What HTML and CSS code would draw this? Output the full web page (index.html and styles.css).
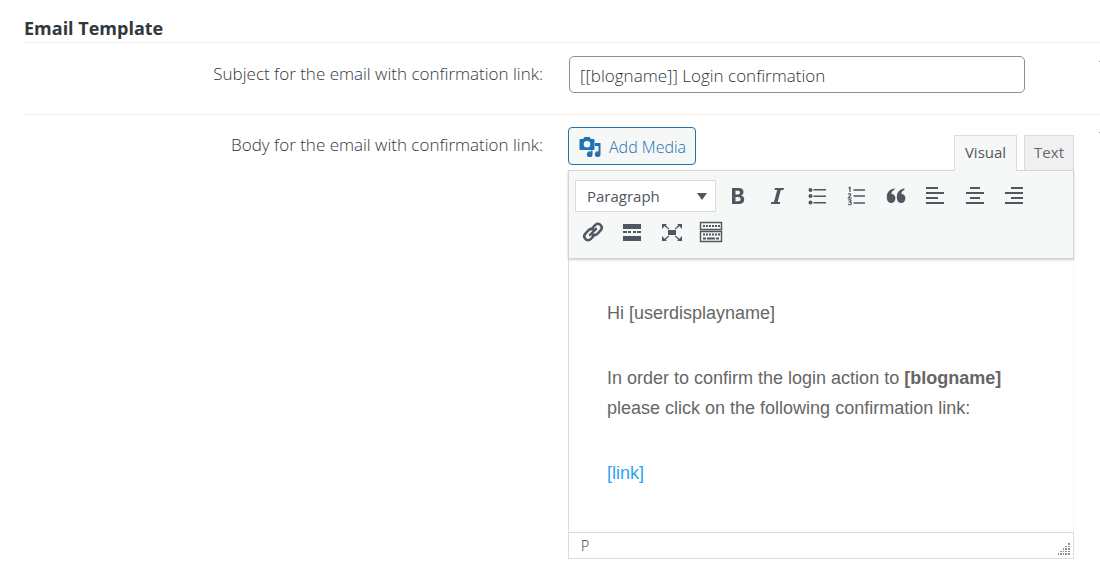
FILE: index.html
```html
<!DOCTYPE html>
<html lang="en">
<head>
    <meta charset="UTF-8">
    <meta name="viewport" content="width=device-width, initial-scale=1.0">
    <title>Email Template</title>
    <link rel="stylesheet" href="styles.css">
</head>
<body>
    <main class="settings">
        <h2 class="section-title">Email Template</h2>

        <div class="form-row">
            <label class="row-label" for="subject">Subject for the email with confirmation link:</label>
            <div class="row-control">
                <input type="text" id="subject" name="subject" class="text-input" value="[[blogname]] Login confirmation">
            </div>
            <span class="row-mark"></span>
        </div>

        <div class="form-row">
            <span class="row-label" id="bodyLabel">Body for the email with confirmation link:</span>
            <div class="row-control">
                <div class="editor-tools">
                    <button type="button" class="media-btn">
                        <svg width="22" height="22" viewBox="0 0 22 22" fill="currentColor">
                            <path fill-rule="evenodd" d="M1.500 3H4L5.500 1h5L12 3h2.500q1 0 1 1v9q0 1-1 1h-13q-1 0-1-1V4q0-1 1-1zM8 5a3.300 3.300 0 1 0 0 6.600A3.300 3.300 0 0 0 8 5z"/>
                            <path d="M16 7h5.500v11.200a2.800 2.800 0 1 1-2-2.700v-5.500H16z"/>
                            <path d="M11.800 14.600h1.700v3.800a2.800 2.800 0 1 1-1.700-2.700z"/>
                        </svg>
                        <span>Add Media</span>
                    </button>
                    <div class="editor-tabs">
                        <button type="button" class="tab active">Visual</button>
                        <button type="button" class="tab">Text</button>
                    </div>
                </div>

                <div class="editor">
                    <div class="toolbar">
                        <div class="toolbar-row">
                            <div class="format-select">
                                <select aria-label="Format">
                                    <option>Paragraph</option>
                                </select>
                                <svg width="10" height="7" viewBox="0 0 10 7" fill="currentColor"><path d="M0 0h10L5 7z"/></svg>
                            </div>
                            <div class="tool-group wide">
                                <button type="button" class="tool" aria-label="Bold">
                                    <svg width="24" height="24" viewBox="0 0 24 24" fill="currentColor"><path fill-rule="evenodd" d="M6 4h6.500c3.500 0 5 1.600 5 4 0 1.900-1 3-2.500 3.500 2 .4 3.200 1.800 3.200 3.900 0 3-2.200 4.600-5.700 4.600H6zM9.500 6.700v3.700h2.300c1.500 0 2.200-.7 2.200-1.900s-.8-1.800-2.300-1.800zM9.500 13v4.300h2.700c1.600 0 2.400-.8 2.400-2.200S13.800 13 12.200 13z"/></svg>
                                </button>
                                <button type="button" class="tool" aria-label="Italic">
                                    <svg width="24" height="24" viewBox="0 0 24 24" fill="currentColor"><path d="M10 4h9l-.5 2h-2.700l-3.200 12h2.700l-.5 2H5.800l.5-2H9l3.200-12H9.500z"/></svg>
                                </button>
                                <button type="button" class="tool" aria-label="Bulleted list">
                                    <svg width="24" height="24" viewBox="0 0 24 24" fill="currentColor"><circle cx="5.500" cy="6" r="2"/><circle cx="5.500" cy="12" r="2"/><circle cx="5.500" cy="18.500" r="2"/><path d="M8.500 5H21v1.600H8.500zM8.500 11.400H21V13H8.500zM8.500 18H21v1.600H8.500z"/></svg>
                                </button>
                                <button type="button" class="tool" aria-label="Numbered list">
                                    <svg width="24" height="24" viewBox="0 0 24 24" fill="none" stroke="currentColor"><path stroke-width="1.600" d="M9.500 6H21M9.500 12H21M9.500 19H21"/><path stroke-width="1.200" d="M4.500 4.200L6 3.300V8M4.200 10.400q.8-1 1.900-.6 1.400 1-.3 2.300L4.400 14H8M4.400 16.200q1-.8 2.200-.3 1.200 1.300-1 2.100 2.800.6 1.300 2.400-1.200.7-2.700 0"/></svg>
                                </button>
                                <button type="button" class="tool" aria-label="Blockquote">
                                    <svg width="24" height="24" viewBox="0 0 24 24" fill="currentColor"><path d="M10.500 4.500v1.300C8.600 6.500 7.500 7.900 7.400 9.900c2.200-.2 4 1.500 4 4.200 0 3-1.700 5-4.200 5-2.800 0-4.400-2.300-4.400-6 0-4.800 2.700-8.100 7.700-8.600z"/><path d="M20.500 4.500v1.300c-1.900.7-3 2.100-3.100 4.100 2.200-.2 4 1.500 4 4.200 0 3-1.700 5-4.200 5-2.800 0-4.400-2.300-4.400-6 0-4.800 2.700-8.100 7.700-8.600z"/></svg>
                                </button>
                                <button type="button" class="tool" aria-label="Align left">
                                    <svg width="24" height="24" viewBox="0 0 24 24" fill="currentColor"><path d="M3 3h12v2H3zM3 8h18v2H3zM3 13h12v2H3zM3 18h18v2H3z"/></svg>
                                </button>
                                <button type="button" class="tool" aria-label="Align center">
                                    <svg width="24" height="24" viewBox="0 0 24 24" fill="currentColor"><path d="M7 3h10v2H7zM3 8h18v2H3zM7 13h10v2H7zM3 18h18v2H3z"/></svg>
                                </button>
                                <button type="button" class="tool" aria-label="Align right">
                                    <svg width="24" height="24" viewBox="0 0 24 24" fill="currentColor"><path d="M9 3h12v2H9zM3 8h18v2H3zM9 13h12v2H9zM3 18h18v2H3z"/></svg>
                                </button>
                            </div>
                        </div>
                        <div class="toolbar-row">
                            <div class="tool-group">
                                <button type="button" class="tool" aria-label="Insert link">
                                    <svg width="24" height="24" viewBox="0 0 24 24" fill="none" stroke="currentColor" stroke-width="2.500" stroke-linecap="round"><path d="M10 9.500l4.300-4.700q2.200-2 4.700-.3 3 2.500 1.200 5.200l-4 4.400q-2.400 2-4.800.4M14 14.500l-4.300 4.700q-2.200 2-4.700.3-3-2.500-1.200-5.200l4-4.400q2.400-2 4.800-.4M9 15l6-6.200"/></svg>
                                </button>
                                <button type="button" class="tool" aria-label="Read more">
                                    <svg width="24" height="24" viewBox="0 0 24 24" fill="currentColor"><path d="M3 4h18v5H3zM3 11h4v2H3zM8 11h3v2H8zM13 11h3v2h-3zM17 11h4v2h-4zM3 16h18v5H3z"/></svg>
                                </button>
                                <button type="button" class="tool" aria-label="Fullscreen">
                                    <svg width="24" height="24" viewBox="0 0 24 24" fill="currentColor"><path d="M8 10h8v5H8z"/><path d="M2 4h5L5.700 5.300l3.600 3.500-.7.700L4.600 6.300 2 9zM22 4h-5l1.300 1.300-3.600 3.500.7.700 4-3.200L22 9zM2 21h5l-1.300-1.300 3.600-3.500-.7-.7-4 3.200L2 16zM22 21h-5l1.300-1.300-3.600-3.500.7-.7 4 3.200L22 16z"/></svg>
                                </button>
                                <button type="button" class="tool" aria-label="Toggle toolbar">
                                    <svg width="24" height="24" viewBox="0 0 24 24" fill="none" stroke="currentColor"><path stroke-width="1.400" d="M1.500 2.500h21v7h-21zM1.500 11.500h21v10h-21z"/><path stroke-width="2" stroke-dasharray="2 1" d="M4 6h17M4 14.500h17"/><path stroke-width="2" d="M4 18.500h3M8 18.500h8M17 18.500h3"/></svg>
                                </button>
                            </div>
                        </div>
                    </div>

                    <div class="editor-body" role="textbox" aria-multiline="true" aria-labelledby="bodyLabel" contenteditable="true">
                        <p>Hi [userdisplayname]</p>
                        <p>In order to confirm the login action to <strong>[blogname]</strong> please click on the following confirmation link:</p>
                        <p><a href="#">[link]</a></p>
                    </div>

                    <div class="status-bar">
                        <span>P</span>
                        <svg width="12" height="12" viewBox="0 0 12 12" fill="currentColor"><path d="M10 0h2v2h-2zM7 3h2v1H7zM10 3h2v1h-2zM5 5h1v2H5zM7 5h2v2H7zM10 5h2v2h-2zM2 8h2v1H2zM5 8h1v1H5zM7 8h2v1H7zM10 8h2v1h-2zM0 10h1v2H0zM2 10h2v2H2zM5 10h1v2H5zM7 10h2v2H7zM10 10h2v2h-2z"/></svg>
                    </div>
                </div>
            </div>
            <span class="row-mark"></span>
        </div>
    </main>
</body>
</html>
```

FILE: styles.css
```css
* {
    margin: 0;
    padding: 0;
    box-sizing: border-box;
}

body {
    font-family: 'Segoe UI', 'Open Sans', sans-serif;
    font-weight: 350;
    background: white;
    color: #32373c;
}

.settings {
    padding: 14px 0 20px 24px;
}

.section-title {
    font-size: 18px;
    line-height: 28px;
    font-weight: 700;
    color: #32373c;
    border-bottom: 1px solid #eee;
}

.form-row {
    display: grid;
    grid-template-columns: minmax(0, 1fr) minmax(0, 506px) 1px;
    column-gap: 25px;
    padding: 13px 0 21px;
}

.form-row + .form-row {
    border-top: 1px solid #eee;
    padding-top: 12px;
}

.row-label {
    font-size: 17px;
    line-height: 36px;
    text-align: right;
}

.row-mark {
    height: 1px;
    margin-top: 5px;
    background: #d0a060;
}

.text-input {
    width: calc(100% - 50px);
    height: 37px;
    margin-left: 1px;
    padding: 2px 10px 0;
    border: 1px solid #8c8f94;
    border-radius: 5px;
    font-family: inherit;
    font-weight: inherit;
    font-size: 17px;
    color: #2c3338;
}

.editor-tools {
    display: flex;
    justify-content: space-between;
    align-items: flex-start;
}

.media-btn {
    display: flex;
    align-items: center;
    gap: 8px;
    height: 38px;
    padding: 1px 9px 0 10px;
    border: 1px solid #2271b1;
    border-radius: 4px;
    background: #f6f7f7;
    color: #2271b1;
    font-family: inherit;
    font-weight: inherit;
    font-size: 16px;
    white-space: nowrap;
    cursor: pointer;
}

.editor-tabs {
    display: flex;
    gap: 7px;
    padding-top: 8px;
}

.tab {
    height: 35px;
    padding: 0 9px 2px;
    border: 1px solid #dcdcde;
    border-bottom: none;
    background: #f0f0f1;
    color: #646970;
    font-family: inherit;
    font-size: 15px;
    cursor: pointer;
}

.tab.active {
    height: 36px;
    margin-bottom: -1px;
    padding: 0 10px 3px;
    background: #f6f7f7;
    color: #50575e;
    position: relative;
    z-index: 1;
}

.editor {
    border: 1px solid #dcdcde;
    border-right-color: #f6f7f7;
}

.toolbar {
    display: flex;
    flex-direction: column;
    gap: 2px;
    margin: -1px -1px 0;
    padding: 8px 6px 9px;
    border: 1px solid #d5d5d7;
    background: #f6f7f7;
    box-shadow: 0 1px 2px rgba(0, 0, 0, 0.2);
}

.toolbar-row {
    display: flex;
    align-items: center;
    gap: 4px;
}

.format-select {
    position: relative;
    width: 141px;
    color: #50575e;
}

.format-select select {
    appearance: none;
    display: block;
    width: 100%;
    height: 32px;
    padding: 0 11px;
    border: 1px solid #dcdcde;
    border-radius: 0;
    background: white;
    color: inherit;
    font-family: inherit;
    font-size: 15px;
}

.format-select svg {
    position: absolute;
    top: 13px;
    right: 9px;
    pointer-events: none;
}

.tool-group {
    display: flex;
    justify-content: space-between;
    width: 154px;
}

.tool-group.wide {
    width: 312px;
}

.tool {
    display: flex;
    align-items: center;
    justify-content: center;
    width: 36px;
    height: 34px;
    border: none;
    background: none;
    color: #50575e;
    cursor: pointer;
}

.editor-body {
    padding: 39px 38px 38px;
    color: #666;
    font-family: 'Liberation Sans', Arial, sans-serif;
    font-weight: 400;
    font-size: 18px;
    line-height: 30px;
    outline: none;
}

.editor-body p {
    margin-bottom: 35px;
}

.editor-body p:last-child {
    margin-bottom: 6px;
}

.editor-body a {
    color: #2ea3f2;
    text-decoration: none;
}

.status-bar {
    display: flex;
    justify-content: space-between;
    align-items: flex-end;
    margin: 0 -1px -1px;
    padding: 3px 3px 3px 12px;
    border: 1px solid #dcdcde;
    font-size: 14px;
    line-height: 19px;
}

.status-bar svg {
    color: #8c8f94;
}
```
